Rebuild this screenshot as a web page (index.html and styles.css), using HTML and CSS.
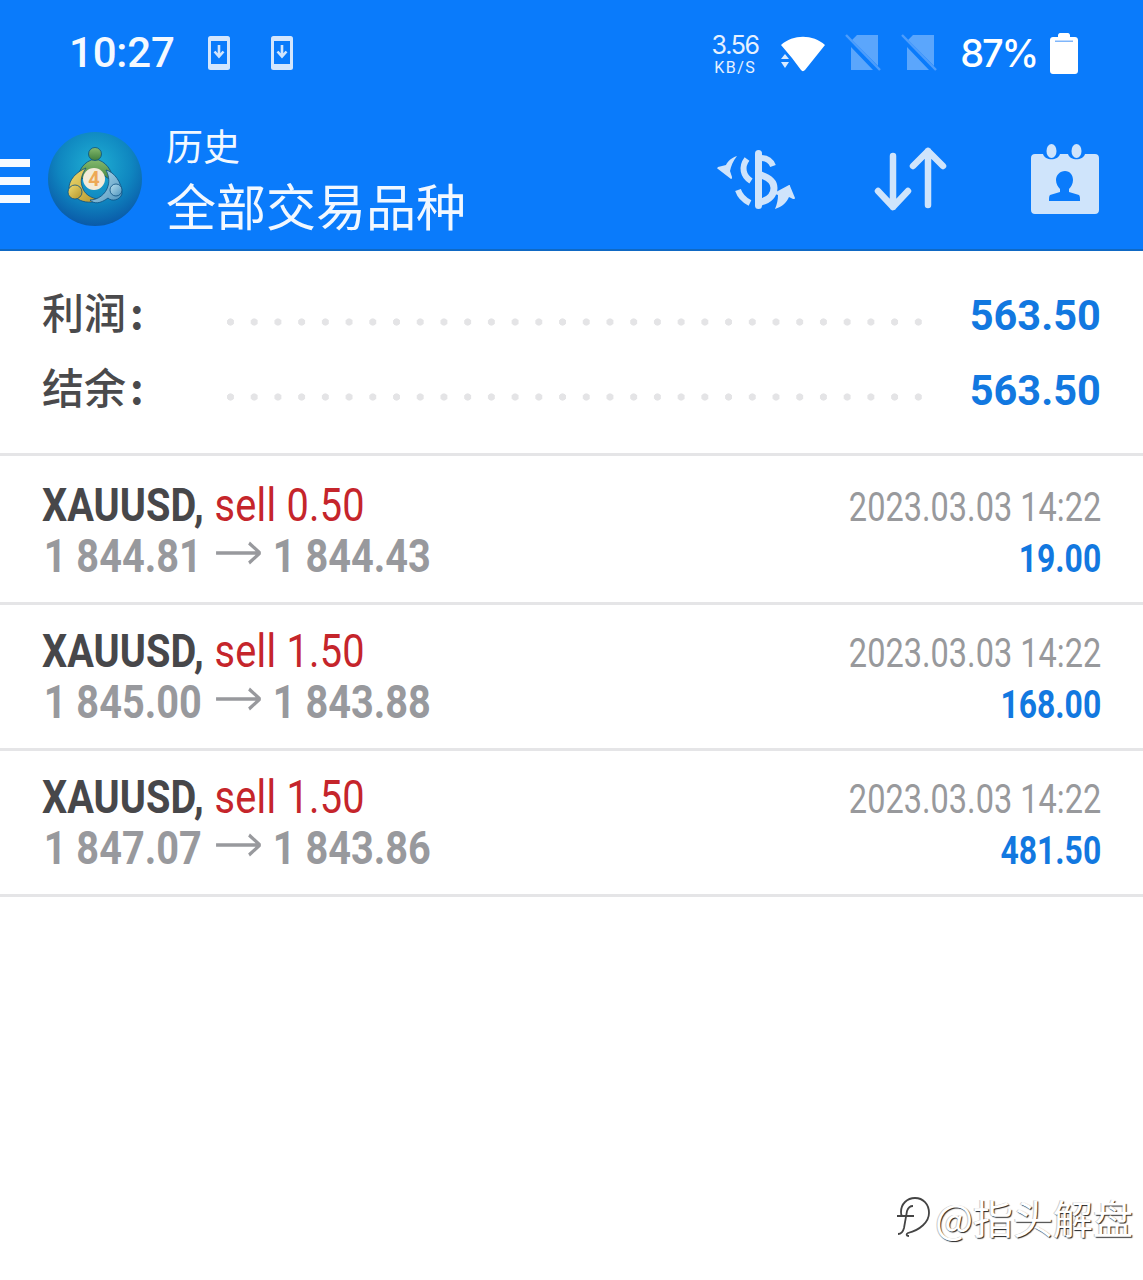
FILE: index.html
```html
<!DOCTYPE html>
<html lang="zh">
<head>
<meta charset="utf-8">
<title>历史</title>
<link rel="stylesheet" href="styles.css">
</head>
<body>
<header class="appbar">
  <div class="status">
    <div class="status-left">
      <span class="clock">10:27</span>
      <svg class="dl" viewBox="0 0 22 34"><rect width="22" height="34" rx="2.5" fill="#d3e6fd"/><rect x="3" y="5" width="16" height="23" fill="#0a7bfb"/><path d="M11 9v11M6.500 15.500 11 20.500l4.500-5" fill="none" stroke="#d3e6fd" stroke-width="2.6"/></svg>
      <svg class="dl" viewBox="0 0 22 34"><rect width="22" height="34" rx="2.5" fill="#d3e6fd"/><rect x="3" y="5" width="16" height="23" fill="#0a7bfb"/><path d="M11 9v11M6.500 15.500 11 20.500l4.500-5" fill="none" stroke="#d3e6fd" stroke-width="2.6"/></svg>
    </div>
    <div class="status-right">
      <div class="speed"><span class="speed-num">3.56</span><span class="speed-unit">KB/S</span></div>
      <svg class="wifi" viewBox="0 0 46 38"><path d="M1 11C13 0 33 0 45 11L25 36c-1.200 1.500-3 1.500-4 0L12 24z" fill="#fff"/><path d="M5 24l4-5 4 5zM5 27h8l-4 6z" fill="#d9eaff" transform="translate(-4 1)"/></svg>
      <svg class="sim" viewBox="0 0 36 38"><path d="M12 1H33V32L7 6zM6 13 28 36H6z" fill="#5ba6fc"/><path d="M1 1 35 36" stroke="#4d9dfc" stroke-width="2.500"/></svg>
      <svg class="sim" viewBox="0 0 36 38"><path d="M12 1H33V32L7 6zM6 13 28 36H6z" fill="#5ba6fc"/><path d="M1 1 35 36" stroke="#4d9dfc" stroke-width="2.500"/></svg>
      <span class="pct">87%</span>
      <svg class="battery" viewBox="0 0 28 41"><path d="M8 2.500C8 1 9 0 10 0h8c1 0 2 1 2 2.500V4h5c1.700 0 3 1.300 3 3v31c0 1.700-1.300 3-3 3H3c-1.700 0-3-1.300-3-3V7c0-1.700 1.300-3 3-3h5z" fill="#fff"/><rect x="5" y="7.500" width="18" height="1.500" fill="#7fb6fb"/></svg>
    </div>
  </div>
  <div class="toolbar">
    <div class="menu"><i></i><i></i><i></i></div>
    <svg class="logo" viewBox="0 0 94 94">
      <defs>
        <radialGradient id="lg" cx="50%" cy="35%" r="65%"><stop offset="0" stop-color="#1fb0d4"/><stop offset=".6" stop-color="#0f86c0"/><stop offset="1" stop-color="#0a5aa8"/></radialGradient>
        <linearGradient id="gr" x1="0" y1="0" x2="0" y2="1"><stop offset="0" stop-color="#86bb6e"/><stop offset="1" stop-color="#3f7f3c"/></linearGradient>
        <linearGradient id="ye" x1="0" y1="0" x2="1" y2="1"><stop offset="0" stop-color="#f0dc70"/><stop offset="1" stop-color="#b3932a"/></linearGradient>
        <linearGradient id="bl" x1="0" y1="0" x2="1" y2="1"><stop offset="0" stop-color="#b9e0ef"/><stop offset="1" stop-color="#4d93bd"/></linearGradient>
      </defs>
      <circle cx="47" cy="47" r="47" fill="url(#lg)"/>
      <g stroke="#0b4f80" stroke-width=".8">
        <path d="M47 27C36 29 30 38 29 50L37 45C41 40 54 40 58 45L66 50C64 38 58 29 47 27z" fill="url(#gr)"/>
        <circle cx="47" cy="22" r="6.500" fill="url(#gr)"/>
        <path d="M38 36C28 40 21 48 21 56L30 67C36 71 44 71 53 68C42 66 36 62 34 54C32 48 34 42 38 36z" fill="url(#ye)"/>
        <circle cx="27" cy="60" r="7" fill="url(#ye)"/>
        <path d="M58 38C66 40 74 50 74 62C72 68 64 70 60 66C52 72 46 72 42 68C50 68 58 62 60 54C62 48 60 42 58 38z" fill="url(#bl)"/>
        <circle cx="68" cy="58" r="6" fill="url(#bl)"/>
      </g>
      <circle cx="46" cy="47" r="11" fill="#f3ead8"/>
      <text class="logo-num" x="46" y="54" text-anchor="middle">4</text>
    </svg>
    <div class="titles">
      <div class="title-small">历史</div>
      <div class="title-big">全部交易品种</div>
    </div>
    <div class="actions">
      <svg class="act-money" viewBox="0 0 80 65">
        <g fill="#cfe4fb">
          <rect x="40" y="3" width="7" height="59" rx="3.500"/>
          <path d="M22 9C16 11 13 14 11 18L3 20C2 21 2 22 3 22L16 32C17 32 17 31 17 30L15 24C16 19 18 14 22 9z"/>
          <path d="M60 62C62 57 63 53 63 48L60 47C59 46 60 45 61 45L74 38C75 38 75 38 75 39L80 51C80 52 79 52 78 52L74 50C72 55 67 60 60 62z"/>
        </g>
        <g fill="none" stroke="#cfe4fb" stroke-width="6">
          <path d="M46 11C52 11 56 14 58 19"/>
          <path d="M32 12C26 20 28 29 36 34"/>
          <path d="M46 28C55 31 59 36 59 41C59 48 54 53 46 55" stroke-width="7"/>
          <path d="M23 43C25 49 29 53 35 56"/>
        </g>
      </svg>
      <svg class="act-sort" viewBox="0 0 76 66" fill="none" stroke="#cfe4fb" stroke-width="6.500" stroke-linecap="round" stroke-linejoin="round"><path d="M20 9V60M5 44 20 60 35 44M55 58V4M40 19 55 4 70 19"/></svg>
      <svg class="act-cal" viewBox="0 0 68 70">
        <path d="M4 10H12C14 17 27 17 29 10H37C39 17 52 17 54 10H64C66.500 10 68 11.500 68 14V66C68 68.500 66.500 70 64 70H4C1.500 70 0 68.500 0 66V14C0 11.500 1.500 10 4 10z" fill="#cfe4fb"/>
        <ellipse cx="20.500" cy="7" rx="5" ry="7" fill="#cfe4fb"/><ellipse cx="45.500" cy="7" rx="5" ry="7" fill="#cfe4fb"/>
        <path d="M34 27C39 27 42 31 42 36C42 40 40 43 38 45V48L48 51C49 52 49 54 49 57H18C18 54 18 52 19 51L29 48V45C27 43 25 40 25 36C25 31 29 27 34 27z" fill="#0a7bfb"/>
      </svg>
    </div>
  </div>
</header>

<section class="summary">
  <div class="sum-row"><span class="sum-label">利润<span class="colon">:</span></span><span class="leader"></span><span class="sum-value">563.50</span></div>
  <div class="sum-row"><span class="sum-label">结余<span class="colon">:</span></span><span class="leader"></span><span class="sum-value">563.50</span></div>
</section>

<section class="deals">
  <article class="deal">
    <div class="deal-left">
      <div class="line-top"><b class="sym">XAUUSD,</b> <span class="side">sell 0.50</span></div>
      <div class="line-price"><span>1 844.81</span><svg class="arrow" viewBox="0 0 54 24"><path d="M1 12H52M40 2 53 12 40 22" fill="none" stroke="#98999d" stroke-width="3.500"/></svg><span>1 844.43</span></div>
    </div>
    <div class="deal-right"><div class="time">2023.03.03 14:22</div><div class="profit">19.00</div></div>
  </article>
  <article class="deal">
    <div class="deal-left">
      <div class="line-top"><b class="sym">XAUUSD,</b> <span class="side">sell 1.50</span></div>
      <div class="line-price"><span>1 845.00</span><svg class="arrow" viewBox="0 0 54 24"><path d="M1 12H52M40 2 53 12 40 22" fill="none" stroke="#98999d" stroke-width="3.500"/></svg><span>1 843.88</span></div>
    </div>
    <div class="deal-right"><div class="time">2023.03.03 14:22</div><div class="profit">168.00</div></div>
  </article>
  <article class="deal">
    <div class="deal-left">
      <div class="line-top"><b class="sym">XAUUSD,</b> <span class="side">sell 1.50</span></div>
      <div class="line-price"><span>1 847.07</span><svg class="arrow" viewBox="0 0 54 24"><path d="M1 12H52M40 2 53 12 40 22" fill="none" stroke="#98999d" stroke-width="3.500"/></svg><span>1 843.86</span></div>
    </div>
    <div class="deal-right"><div class="time">2023.03.03 14:22</div><div class="profit">481.50</div></div>
  </article>
</section>

<footer class="mark">
  <svg class="mark-icon" viewBox="0 0 36 46" fill="none" stroke="#444" stroke-width="1.800"><path d="M14 42c-3 0-3-2-1-3 12-3 21-11 21-20C34 10 28 4 20 4 12 4 6 10 6 18c0 1 0 3 1 4"/><path d="M3 40c3 0 5-2 6-6l3-17c1-3 3-5 6-5M2 22h17"/></svg>
  <span class="mark-text">@指头解盘</span>
</footer>
</body>
</html>
```

FILE: styles.css
```css
* { box-sizing: border-box; }
html, body { margin: 0; padding: 0; }
body {
  width: 1143px;
  height: 1280px;
  overflow: hidden;
  background: #fff;
  font-family: Roboto, "Noto Sans CJK SC", sans-serif;
  position: relative;
}
.appbar {
  height: 251px;
  background: #0a7bfb;
  border-bottom: 2px solid #0f69c4;
}
.status {
  height: 106px;
  display: flex;
  justify-content: space-between;
  align-items: center;
  padding: 0 65px 0 69px;
}
.status-left, .status-right { display: flex; align-items: center; }
.clock { font-size: 42px; font-weight: 500; line-height: 1; color: #f4f9ff; width: 139px; letter-spacing: -.2px; }
.dl { width: 22px; height: 34px; margin-right: 41px; }
.speed { display: flex; flex-direction: column; align-items: center; color: #e6f1ff; width: 48px; margin-right: 21px; }
.speed-num { font-family: Inter, sans-serif; font-size: 25px; line-height: 25px; letter-spacing: -1.300px; }
.speed-unit { font-size: 16px; line-height: 15px; letter-spacing: 1.400px; margin-top: 2px; margin-bottom: -2px; }
.wifi { width: 46px; height: 38px; margin-right: 19px; }
.sim { width: 36px; height: 38px; margin-right: 20px; }
.pct { font-family: Inter, sans-serif; font-weight: 500; font-size: 38px; line-height: 1; color: #fff; margin-left: 3px; margin-right: 13px; letter-spacing: -2.200px; }
.battery { width: 28px; height: 41px; }
.toolbar { display: flex; align-items: center; height: 143px; }
.menu { display: flex; flex-direction: column; gap: 10px; width: 30px; margin-top: 6px; }
.menu i { display: block; height: 8px; background: #f6faff; }
.logo { width: 94px; height: 94px; margin-left: 18px; margin-right: 24px; margin-top: 3px; }
.logo-num { font: 700 20px Roboto, sans-serif; fill: #eda856; }
.titles { color: #f2f8ff; font-family: "Noto Sans CJK SC", sans-serif; font-weight: 400; }
.title-small { font-size: 37px; line-height: 46px; }
.title-big { font-size: 50px; line-height: 60px; margin-top: 6px; }
.actions { margin-left: auto; display: flex; align-items: center; padding-right: 44px; }
.act-money { width: 80px; height: 65px; margin-right: 78px; margin-top: 3px; }
.act-sort { width: 76px; height: 66px; margin-right: 82px; margin-top: 4px; }
.act-cal { width: 68px; height: 70px; margin-top: 3px; }
.summary { height: 202px; padding: 25px 42px 0; }
.sum-row { display: flex; align-items: center; height: 75px; }
.sum-label { width: 185px; font-family: "Noto Sans CJK SC", sans-serif; font-size: 42px; font-weight: 500; color: #4a4a4c; margin-top: -7px; }
.colon { margin-left: 4px; font-weight: 700; }
.leader {
  width: 701px;
  height: 12px;
  margin-top: 17px;
  background: radial-gradient(circle at 3.5px 6px, #e4e4e6 3.3px, transparent 3.9px) 0 0 / 23.72px 12px repeat-x;
}
.sum-value { margin-left: auto; font-size: 43px; font-weight: 700; color: #1278e0; transform: scaleX(.965); transform-origin: right center; margin-top: 3px; }
.deals { border-top: 3px solid #e5e5e7; padding-top: 3px; }
.deal {
  height: 146px;
  border-bottom: 3px solid #e5e5e7;
  padding: 0 42px;
  display: flex;
  justify-content: space-between;
}
.deal-left { padding-top: 20px; }
.line-top, .line-price { white-space: nowrap; transform: scaleX(.845); transform-origin: left center; width: 600px; }
.line-top { font-size: 47px; line-height: 51px; color: #c5252b; }
.sym { color: #47474a; font-weight: 700; }
.side { letter-spacing: .3px; margin-left: 1px; }
.line-price { font-size: 47px; line-height: 51px; font-weight: 700; color: #98999d; display: flex; align-items: center; padding-left: 2px; }
.arrow { width: 54px; height: 24px; margin: -6px 14px 0 16px; }
.deal-right { text-align: right; padding-top: 23px; }
.time, .profit { transform-origin: right center; white-space: nowrap; }
.time { font-size: 41px; line-height: 50px; color: #98999c; transform: scaleX(.793); }
.profit { font-size: 38px; line-height: 50px; font-weight: 700; color: #1278e0; transform: scaleX(.84); margin-top: 2px; }
.mark { position: absolute; right: 10px; top: 1192px; display: flex; align-items: center; gap: 4px; }
.mark-icon { width: 36px; height: 46px; }
.mark-text {
  font-family: "Noto Sans CJK SC", sans-serif;
  font-size: 40px;
  line-height: 50px;
  font-weight: 400;
  color: #fff;
  text-shadow: 1px 1px 1px #222, -1px 0 0 #ccc;
}
```
